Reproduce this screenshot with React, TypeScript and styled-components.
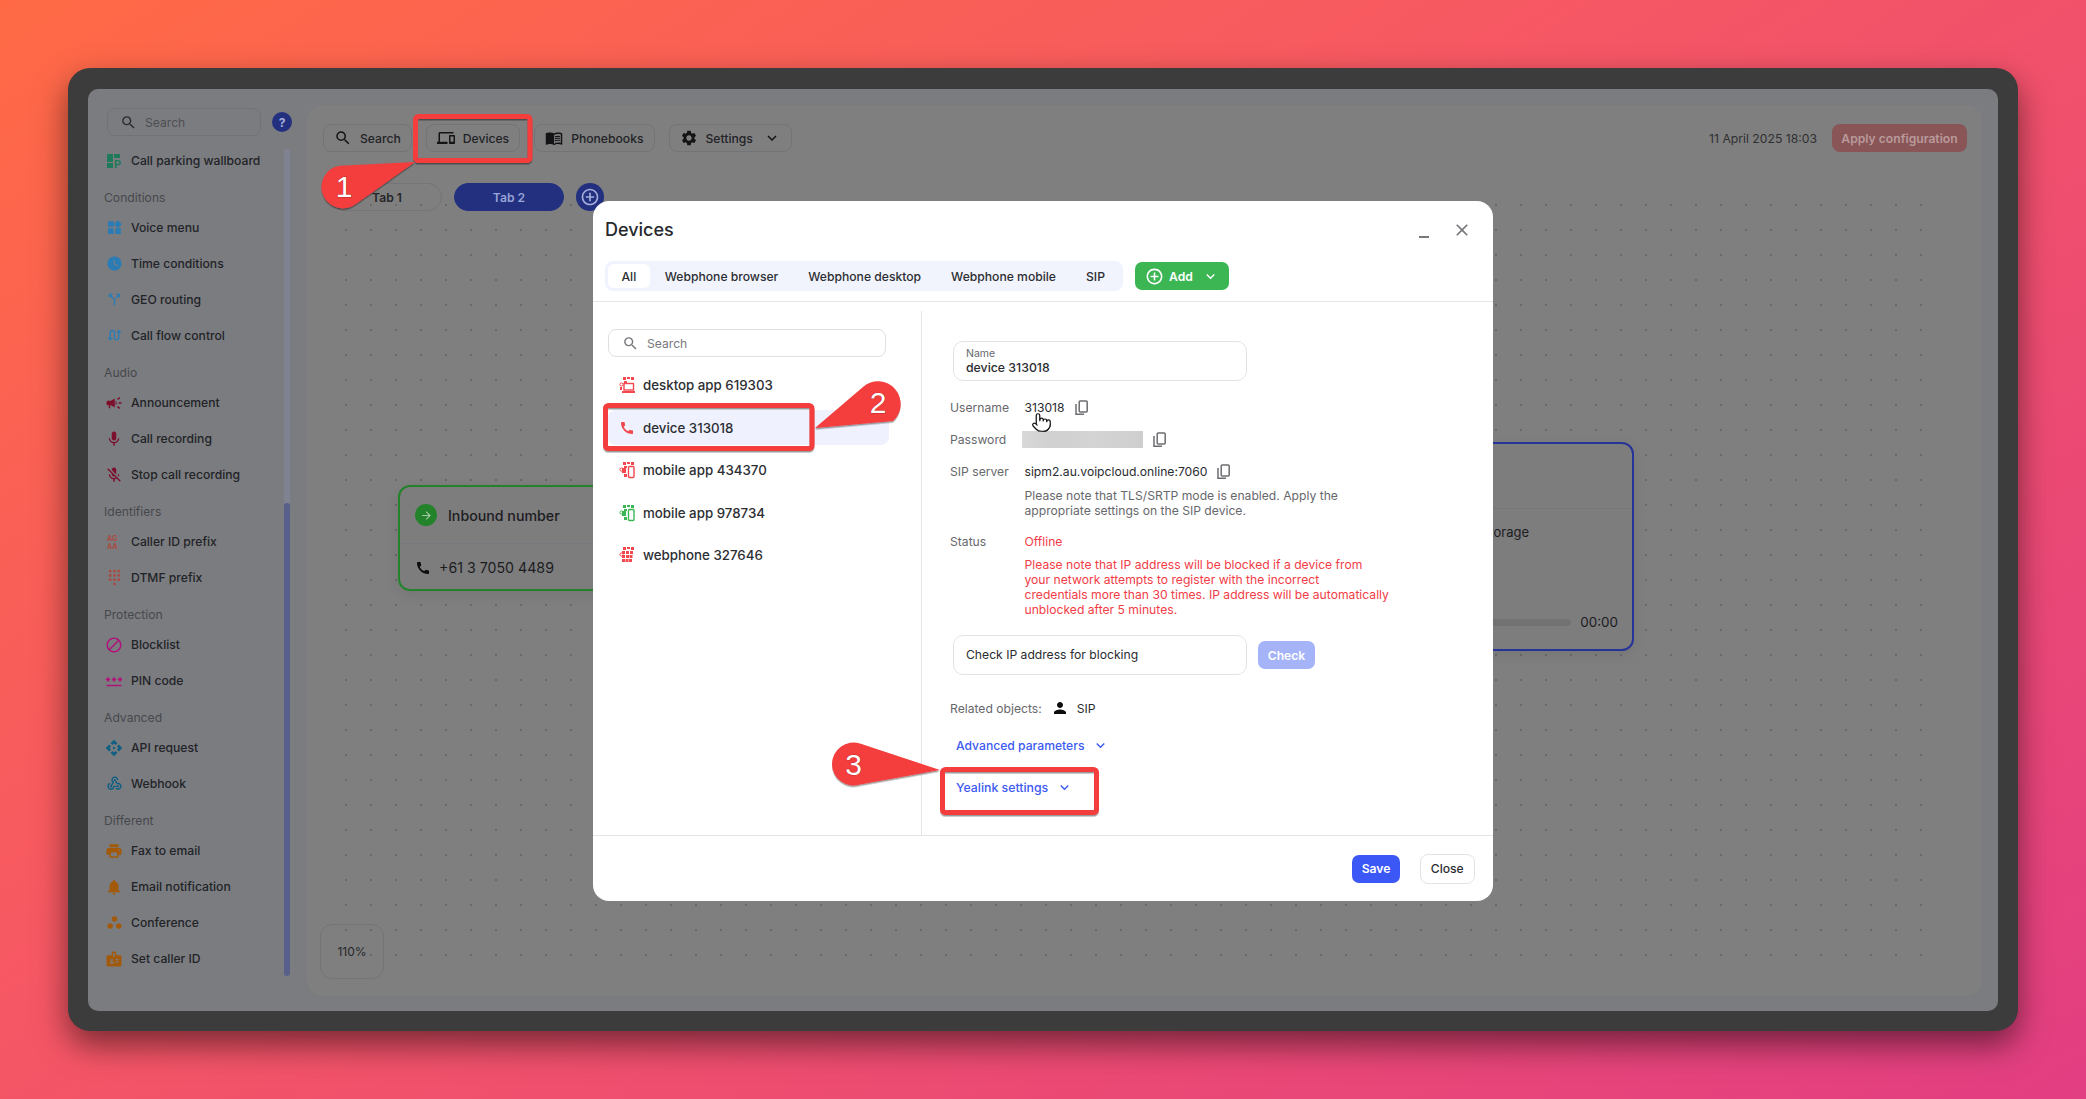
import React from "react";
import styled, { createGlobalStyle } from "styled-components";
import {
    MdSearch,
    MdOutlineDevices,
    MdMenuBook,
    MdSettings,
    MdExpandMore,
    MdAddCircleOutline,
    MdWidgets,
    MdWatchLater,
    MdCallSplit,
    MdSwapCalls,
    MdCampaign,
    MdMic,
    MdMicOff,
    MdDialpad,
    MdBlock,
    MdPassword,
    MdApi,
    MdWebhook,
    MdLocalPrintshop,
    MdNotifications,
    MdWorkspaces,
    MdBadge,
    MdCall,
    MdArrowForward,
    MdClose,
    MdPerson,
} from "react-icons/md";
import { Pointer } from "lucide-react";

const GlobalStyle = createGlobalStyle`
    html, body {
        margin: 0;
        padding: 0;
        width: 2086px;
        height: 1099px;
        overflow: hidden;
    }
    body {
        font-family: Inter, "Liberation Sans", sans-serif;
        background: linear-gradient(148deg, #ff6a45 0%, #f65764 42%, #e23e82 100%);
    }
    * {
        box-sizing: border-box;
    }
`;

const Page = styled.div`
    position: relative;
    width: 2086px;
    height: 1099px;
    padding: 68px 68px 68px 68px;
`;

const Frame = styled.div`
    width: 1950px;
    height: 963px;
    padding: 21px 20px 20px;
    background: #3c3c3c;
    border-radius: 22px;
    box-shadow: 0 14px 32px rgba(0, 0, 0, 0.5);
`;

const AppShell = styled.div`
    position: relative;
    display: flex;
    height: 100%;
    background: #7b7c80;
    border-radius: 10px;
`;

/* sidebar */

const Sidebar = styled.aside`
    width: 219px;
    flex: none;
    padding: 19px 0 0 16px;
    position: relative;
`;

const SideTop = styled.div`
    display: flex;
    align-items: center;
    padding-left: 3px;
    margin-bottom: 7px;
`;

const SideSearch = styled.div`
    width: 154px;
    height: 28px;
    border: 1px solid #717276;
    border-radius: 8px;
    display: flex;
    align-items: center;
    gap: 8px;
    padding-left: 12px;
    font-size: 12.15px;
    color: #4d4e52;
    svg {
        color: #2b2c2f;
    }
`;

const HelpDot = styled.div`
    width: 20px;
    height: 20px;
    margin-left: 11px;
    border-radius: 50%;
    background: #22307f;
    color: #a5aedb;
    font-size: 12px;
    font-weight: 700;
    display: flex;
    align-items: center;
    justify-content: center;
`;

const SideHeading = styled.div`
    height: 31px;
    padding-top: 10px;
    line-height: 18px;
    font-size: 12.15px;
    color: #47484c;
`;

const SideItem = styled.div`
    height: 36px;
    display: flex;
    align-items: center;
    padding: 0 0 1px 1px;
    font-size: 12.15px;
    font-weight: 500;
    color: #222327;
`;

const SideIcon = styled.span<{ $color: string }>`
    width: 18px;
    height: 18px;
    margin-right: 8px;
    flex: none;
    display: flex;
    align-items: center;
    justify-content: center;
    color: ${(props) => props.$color};
`;

const ScrollTrack = styled.div`
    position: absolute;
    left: 196px;
    top: 60px;
    bottom: 35px;
    width: 6px;
    border-radius: 3px;
    background: #7f8290;
`;

const ScrollThumb = styled.div`
    position: absolute;
    left: 0;
    right: 0;
    top: 354px;
    bottom: 0;
    border-radius: 3px;
    background: #575f8a;
`;

/* canvas */

const Canvas = styled.main`
    position: relative;
    flex: 1;
    margin: 16px 16px 15px 0;
    padding: 19px 15px 0 16px;
    background: #7f7f7f;
    border-radius: 16px;
`;

const DotGrid = styled.div`
    position: absolute;
    left: 38px;
    top: 99px;
    right: 60px;
    bottom: 35px;
    background-image: radial-gradient(circle at 1px 1px, #69696b 1px, transparent 1.2px);
    background-size: 25px 25px;
`;

const Toolbar = styled.div`
    position: relative;
    display: flex;
    align-items: center;
    gap: 14px;
`;

const ToolButton = styled.div`
    height: 28px;
    display: flex;
    align-items: center;
    gap: 8px;
    padding: 0 10px;
    border: 1px solid #737477;
    border-radius: 8px;
    font-size: 12.15px;
    font-weight: 500;
    color: #222327;
    svg {
        color: #141416;
    }
`;

const SettingsChevron = styled(MdExpandMore)`
    margin-left: 2px;
`;

const ToolDate = styled.span`
    margin-left: auto;
    font-size: 12.2px;
    color: #2e2f31;
`;

const ApplyButton = styled.div`
    width: 135px;
    height: 28px;
    margin-left: 1px;
    display: flex;
    align-items: center;
    justify-content: center;
    border-radius: 8px;
    background: #8a5557;
    color: #b89a9b;
    font-size: 12.15px;
    font-weight: 600;
`;

const TabRow = styled.div`
    position: relative;
    display: flex;
    align-items: center;
    gap: 12px;
    margin: 31px 0 0 9px;
`;

const FlowTab = styled.div<{ $active?: boolean }>`
    width: 110px;
    height: 28px;
    display: flex;
    align-items: center;
    justify-content: center;
    border-radius: 14px;
    border: 1px solid ${(props) => (props.$active ? "#22307f" : "#747578")};
    background: ${(props) => (props.$active ? "#22307f" : "transparent")};
    color: ${(props) => (props.$active ? "#98a3d6" : "#26272a")};
    font-size: 12.15px;
    font-weight: 600;
`;

const AddTab = styled.div`
    width: 28px;
    height: 28px;
    border-radius: 50%;
    background: #22307f;
    color: #a5aedb;
    display: flex;
    align-items: center;
    justify-content: center;
`;

const ZoomBadge = styled.div`
    position: absolute;
    left: 13px;
    bottom: 17px;
    width: 64px;
    height: 55px;
    display: flex;
    align-items: center;
    justify-content: center;
    border: 1px solid #737477;
    border-radius: 12px;
    font-size: 12px;
    color: #26272a;
`;

const Node = styled.div<{ $border: string }>`
    position: absolute;
    border: 2px solid ${(props) => props.$border};
    border-radius: 12px;
    background: #7d7d7e;
    box-shadow: 0 4px 14px rgba(0, 0, 0, 0.08);
`;

const InboundNode = styled(Node)`
    left: 91px;
    top: 380px;
    width: 300px;
    height: 106px;
`;

const StorageNode = styled(Node)`
    left: 993px;
    top: 337px;
    width: 334px;
    height: 209px;
`;

const NodeHead = styled.div`
    height: 57px;
    display: flex;
    align-items: center;
    gap: 11px;
    padding-left: 15px;
    border-bottom: 1px solid #76777d;
    font-size: 14.2px;
    font-weight: 500;
    color: #1c1c1e;
`;

const NodeHeadTall = styled(NodeHead)`
    height: 65px;
`;

const GreenDot = styled.span`
    width: 22px;
    height: 22px;
    border-radius: 50%;
    background: #23832a;
    color: #a6c9a8;
    display: flex;
    align-items: center;
    justify-content: center;
`;

const NodeLine = styled.div`
    display: flex;
    align-items: center;
    gap: 8px;
    padding: 15px 0 0 15px;
    font-size: 14.2px;
    color: #1c1c1e;
    svg {
        color: #0c0c0c;
    }
`;

const StorageText = styled.div`
    padding: 15px 103px 0 0;
    text-align: right;
    font-size: 13px;
    color: #1c1c1e;
`;

const StorageTimeline = styled.div`
    display: flex;
    align-items: center;
    justify-content: flex-end;
    gap: 9px;
    margin-top: 74px;
    padding-right: 14px;
    font-size: 13.4px;
    color: #1c1c1e;
`;

const StorageBar = styled.div`
    width: 150px;
    height: 7px;
    border-radius: 4px;
    background: #727272;
`;

/* modal */

const Modal = styled.section`
    position: absolute;
    left: 505px;
    top: 112px;
    width: 900px;
    height: 700px;
    display: flex;
    flex-direction: column;
    background: #fff;
    border-radius: 16px;
    overflow: hidden;
`;

const ModalHead = styled.header`
    height: 60px;
    flex: none;
    display: flex;
    align-items: flex-start;
    justify-content: space-between;
    padding: 17px 21px 0 12px;
`;

const ModalTitle = styled.h2`
    margin: 0;
    font-size: 18px;
    line-height: 24px;
    font-weight: 500;
    color: #26282c;
`;

const HeadControls = styled.div`
    display: flex;
    align-items: center;
    gap: 23px;
    height: 24px;
    color: #77787c;
`;

const MinimizeMark = styled.span`
    width: 10px;
    height: 2px;
    margin-top: 13px;
    background: #77787c;
`;

const TabLine = styled.div`
    height: 41px;
    flex: none;
    display: flex;
    gap: 12px;
    padding-left: 12px;
    border-bottom: 1px solid #e4e5e8;
`;

const TypeTabs = styled.div`
    width: 518px;
    height: 30px;
    display: flex;
    align-items: center;
    padding: 0 3px;
    border-radius: 8px;
    background: #f2f4fd;
`;

const TypeTab = styled.div<{ $active?: boolean }>`
    height: 24px;
    display: flex;
    align-items: center;
    padding: 0 ${(props) => (props.$active ? "13.5px" : "15px")};
    border-radius: 6px;
    background: ${(props) => (props.$active ? "#fff" : "transparent")};
    font-size: 12.15px;
    font-weight: 500;
    white-space: nowrap;
    color: #2c2e33;
`;

const AddButton = styled.div`
    width: 94px;
    height: 28px;
    margin-top: 1px;
    display: flex;
    align-items: center;
    gap: 5px;
    padding-left: 10px;
    border-radius: 7px;
    background: #3cb553;
    color: #fff;
    font-size: 12.15px;
    font-weight: 600;
`;

const AddChevron = styled(MdExpandMore)`
    margin-left: 4px;
`;

const ModalBody = styled.div`
    flex: 1;
    min-height: 0;
    display: flex;
`;

const DeviceColumn = styled.div`
    width: 329px;
    flex: none;
    margin-top: 9px;
    padding: 18px 0 0 15px;
    border-right: 1px solid #e4e5e8;
`;

const DeviceSearch = styled.div`
    width: 278px;
    height: 28px;
    display: flex;
    align-items: center;
    gap: 8px;
    padding-left: 13px;
    border: 1px solid #dfe0e4;
    border-radius: 8px;
    font-size: 12.15px;
    color: #77787c;
`;

const DeviceList = styled.div`
    display: flex;
    flex-direction: column;
    gap: 7.5px;
    margin-top: 10.5px;
`;

const DeviceRow = styled.div<{ $active?: boolean }>`
    width: 281px;
    height: 35px;
    display: flex;
    align-items: center;
    gap: 8px;
    padding-left: 11px;
    border-radius: 8px;
    background: ${(props) => (props.$active ? "#eff2fe" : "transparent")};
    font-size: 13.3px;
    font-weight: 500;
    color: #2c2e33;
`;

const DetailColumn = styled.div`
    flex: 1;
    padding: 39px 0 0 28px;
`;

const FieldBox = styled.div`
    width: 293.5px;
    height: 40px;
    margin-left: 3px;
    padding: 0 12px;
    border: 1px solid #e2e3e6;
    border-radius: 10px;
    color: #2a2c30;
    font-size: 12.3px;
    font-weight: 500;
`;

const NameBox = styled(FieldBox)`
    padding-top: 6px;
    line-height: 15px;
`;

const NameLabel = styled.div`
    font-size: 10.5px;
    line-height: 12px;
    font-weight: 400;
    color: #67686c;
`;

const InfoTable = styled.div`
    margin-top: 11px;
`;

const InfoRow = styled.div`
    height: 32px;
    display: flex;
    align-items: center;
    padding-bottom: 1px;
    font-size: 12.15px;
    color: #2a2c30;
`;

const InfoLabel = styled.span`
    width: 74.5px;
    flex: none;
    color: #67686c;
`;

const CopyGlyph = styled.svg`
    margin-left: 10px;
    flex: none;
    color: #6c6d70;
`;

const HiddenPassword = styled.div`
    width: 121px;
    height: 17px;
    margin-left: -2.5px;
    background: linear-gradient(90deg, #d8d8d8, #d0d0d0 25%, #d4d4d4 60%, #cecece);
`;

const NoteText = styled.div<{ $danger?: boolean }>`
    margin-left: 74.5px;
    margin-top: ${(props) => (props.$danger ? "3px" : "0")};
    width: 380px;
    font-size: 12.15px;
    line-height: 15px;
    color: ${(props) => (props.$danger ? "#f23c46" : "#67686c")};
`;

const StatusRow = styled(InfoRow)`
    height: 24px;
    margin-top: 11.5px;
    padding-bottom: 0;
`;

const OfflineValue = styled.span`
    color: #f23c46;
`;

const CheckLine = styled.div`
    display: flex;
    align-items: center;
    gap: 11.5px;
    margin-top: 18.5px;
`;

const CheckBox = styled(FieldBox)`
    display: flex;
    align-items: center;
    padding-bottom: 2px;
    font-weight: 400;
    font-size: 12.15px;
`;

const CheckButton = styled.div`
    width: 57px;
    height: 28px;
    display: flex;
    align-items: center;
    justify-content: center;
    border-radius: 7px;
    background: #a5b4f8;
    color: #fff;
    font-size: 12.15px;
    font-weight: 600;
`;

const RelatedLine = styled.div`
    display: flex;
    align-items: center;
    height: 20px;
    margin-top: 23px;
    font-size: 12.15px;
    color: #2a2c30;
    span:first-child {
        color: #67686c;
        margin-right: 9px;
    }
    svg {
        margin-right: 8px;
        color: #0d0d0d;
    }
`;

const ExpandLink = styled.div`
    display: flex;
    align-items: center;
    gap: 8px;
    height: 20px;
    margin: 17px 0 0 6px;
    font-size: 12.15px;
    font-weight: 500;
    color: #3d5af1;
`;

const ExpandLinkLower = styled(ExpandLink)`
    margin-top: 22px;
    font-size: 12.3px;
`;

const ModalFoot = styled.footer`
    height: 66px;
    flex: none;
    display: flex;
    align-items: center;
    justify-content: flex-end;
    gap: 20px;
    padding-right: 18.5px;
    border-top: 1px solid #e4e5e8;
`;

const SaveButton = styled.div`
    width: 48px;
    height: 28px;
    display: flex;
    align-items: center;
    justify-content: center;
    border-radius: 7px;
    background: #3b57f5;
    color: #fff;
    font-size: 12.15px;
    font-weight: 600;
`;

const CloseButton = styled.div`
    width: 54.5px;
    height: 30px;
    display: flex;
    align-items: center;
    justify-content: center;
    border: 1px solid #e2e3e6;
    border-radius: 8px;
    color: #2a2c30;
    font-size: 12.15px;
    font-weight: 500;
`;

/* overlays on top of the screenshot */

const HandCursor = styled(Pointer)`
    position: absolute;
    left: 1031px;
    top: 412px;
    color: #111;
`;

const AnnotationLayer = styled.svg`
    position: absolute;
    left: 0;
    top: 0;
    pointer-events: none;
`;

const BubbleNumber = styled.text`
    font-family: "Liberation Sans", Arial, sans-serif;
    font-size: 30px;
    fill: #fff;
    text-anchor: middle;
    dominant-baseline: central;
    paint-order: stroke;
    stroke: rgba(90, 0, 0, 0.35);
    stroke-width: 1px;
`;

const ParkingIcon = () => (
    <svg width="16" height="16" viewBox="0 0 16 16">
        <rect x="1" y="1" width="6" height="8" fill="#1f7a5c" />
        <rect x="1" y="10" width="6" height="5" fill="#1f7a5c" />
        <rect x="8" y="1" width="6" height="4" fill="#1f7a5c" />
        <text x="8" y="15" fontSize="11" fontWeight="700" fill="#1f7a5c" fontFamily="Inter, sans-serif">
            P
        </text>
    </svg>
);

const PrefixIcon = () => (
    <svg width="16" height="16" viewBox="0 0 16 16" fill="#a94b42" fontFamily="Inter, sans-serif" fontWeight="700">
        <text x="1" y="7" fontSize="7">
            AG
        </text>
        <text x="1" y="15" fontSize="7">
            AA
        </text>
    </svg>
);

const CopyIcon = () => (
    <CopyGlyph width="13" height="16" viewBox="0 0 13 16" fill="none" stroke="currentColor" strokeWidth="1.5">
        <rect x="4.2" y="1" width="8" height="11" rx="1" />
        <path d="M1 4v10.2h8" />
    </CopyGlyph>
);

const DeviceIcon = ({ kind, color }: { kind: string; color: string }) => (
    <svg width="16" height="18" viewBox="0 0 16 18" fill={color} stroke="none">
        <rect x="4" y="1" width="3" height="3" />
        <rect x="8" y="1" width="3" height="2" />
        <rect x="12" y="1" width="3" height="3" />
        {kind !== "web" && <rect x="5" y="5" width="3" height="2" />}
        <circle cx="2.5" cy="8.5" r="1.6" fill="none" stroke={color} />
        {kind === "desktop" && (
            <>
                <rect x="5" y="7.5" width="9.5" height="6.5" fill="none" stroke={color} strokeWidth="1.4" />
                <rect x="3" y="15" width="13" height="2" />
                <rect x="1" y="11" width="2" height="3" />
            </>
        )}
        {kind === "mobile" && (
            <>
                <rect x="9.5" y="5.5" width="5.5" height="11" rx="1" fill="none" stroke={color} strokeWidth="1.4" />
                <rect x="3" y="7" width="4" height="5" />
                <rect x="5" y="13" width="3" height="3" />
            </>
        )}
        {kind === "web" && (
            <>
                <rect x="3" y="5" width="3" height="3" />
                <rect x="7" y="5" width="3" height="3" />
                <rect x="11" y="5" width="3" height="3" />
                <rect x="3" y="9" width="3" height="3" />
                <rect x="7" y="9" width="3" height="3" />
                <rect x="10.5" y="9" width="3" height="3" />
                <rect x="3" y="13" width="3" height="3" />
                <rect x="6.5" y="13" width="3" height="3" />
                <rect x="10" y="13" width="3" height="3" />
            </>
        )}
    </svg>
);

const GREEN = "#1f7a5c";
const BLUE = "#2b7cb4";
const CRIMSON = "#7c0f2c";
const BRICK = "#a94b42";
const MAGENTA = "#b0127a";
const TEAL = "#0f5f82";
const AMBER = "#a2590a";

type SideEntry = { heading: string } | { label: string; color: string; icon: React.ReactNode };

const sideEntries: SideEntry[] = [
    { label: "Call parking wallboard", color: GREEN, icon: <ParkingIcon /> },
    { heading: "Conditions" },
    { label: "Voice menu", color: BLUE, icon: <MdWidgets size={17} /> },
    { label: "Time conditions", color: BLUE, icon: <MdWatchLater size={17} /> },
    { label: "GEO routing", color: BLUE, icon: <MdCallSplit size={17} /> },
    { label: "Call flow control", color: BLUE, icon: <MdSwapCalls size={17} /> },
    { heading: "Audio" },
    { label: "Announcement", color: CRIMSON, icon: <MdCampaign size={18} /> },
    { label: "Call recording", color: CRIMSON, icon: <MdMic size={18} /> },
    { label: "Stop call recording", color: CRIMSON, icon: <MdMicOff size={18} /> },
    { heading: "Identifiers" },
    { label: "Caller ID prefix", color: BRICK, icon: <PrefixIcon /> },
    { label: "DTMF prefix", color: BRICK, icon: <MdDialpad size={17} /> },
    { heading: "Protection" },
    { label: "Blocklist", color: MAGENTA, icon: <MdBlock size={18} /> },
    { label: "PIN code", color: MAGENTA, icon: <MdPassword size={18} /> },
    { heading: "Advanced" },
    { label: "API request", color: TEAL, icon: <MdApi size={18} /> },
    { label: "Webhook", color: TEAL, icon: <MdWebhook size={17} /> },
    { heading: "Different" },
    { label: "Fax to email", color: AMBER, icon: <MdLocalPrintshop size={18} /> },
    { label: "Email notification", color: AMBER, icon: <MdNotifications size={18} /> },
    { label: "Conference", color: AMBER, icon: <MdWorkspaces size={17} /> },
    { label: "Set caller ID", color: AMBER, icon: <MdBadge size={18} /> },
];

const deviceRows = [
    { label: "desktop app 619303", kind: "desktop", color: "#f2484e" },
    { label: "device 313018", kind: "phone", color: "#f2484e" },
    { label: "mobile app 434370", kind: "mobile", color: "#f2484e" },
    { label: "mobile app 978734", kind: "mobile", color: "#3cb553" },
    { label: "webphone 327646", kind: "web", color: "#f2484e" },
];

const App = () => {
    return (
        <Page>
            <GlobalStyle />
            <Frame>
                <AppShell>
                    <Sidebar>
                        <SideTop>
                            <SideSearch>
                                <MdSearch size={17} />
                                Search
                            </SideSearch>
                            <HelpDot>?</HelpDot>
                        </SideTop>
                        {sideEntries.map((entry) =>
                            "heading" in entry ? (
                                <SideHeading key={entry.heading}>{entry.heading}</SideHeading>
                            ) : (
                                <SideItem key={entry.label}>
                                    <SideIcon $color={entry.color}>{entry.icon}</SideIcon>
                                    {entry.label}
                                </SideItem>
                            )
                        )}
                        <ScrollTrack>
                            <ScrollThumb />
                        </ScrollTrack>
                    </Sidebar>
                    <Canvas>
                        <DotGrid />
                        <InboundNode $border="#23832a">
                            <NodeHead>
                                <GreenDot>
                                    <MdArrowForward size={13} />
                                </GreenDot>
                                Inbound number
                            </NodeHead>
                            <NodeLine>
                                <MdCall size={16} />
                                +61 3 7050 4489
                            </NodeLine>
                        </InboundNode>
                        <StorageNode $border="#26349a">
                            <NodeHeadTall />
                            <StorageText>Storage</StorageText>
                            <StorageTimeline>
                                <StorageBar />
                                00:00
                            </StorageTimeline>
                        </StorageNode>
                        <Toolbar>
                            <ToolButton>
                                <MdSearch size={18} />
                                Search
                            </ToolButton>
                            <ToolButton>
                                <MdOutlineDevices size={18} />
                                Devices
                            </ToolButton>
                            <ToolButton>
                                <MdMenuBook size={18} />
                                Phonebooks
                            </ToolButton>
                            <ToolButton>
                                <MdSettings size={18} />
                                Settings
                                <SettingsChevron size={18} />
                            </ToolButton>
                            <ToolDate>11 April 2025 18:03</ToolDate>
                            <ApplyButton>Apply configuration</ApplyButton>
                        </Toolbar>
                        <TabRow>
                            <FlowTab>Tab 1</FlowTab>
                            <FlowTab $active>Tab 2</FlowTab>
                            <AddTab>
                                <MdAddCircleOutline size={20} />
                            </AddTab>
                        </TabRow>
                        <ZoomBadge>110%</ZoomBadge>
                    </Canvas>
                    <Modal>
                        <ModalHead>
                            <ModalTitle>Devices</ModalTitle>
                            <HeadControls>
                                <MinimizeMark />
                                <MdClose size={20} />
                            </HeadControls>
                        </ModalHead>
                        <TabLine>
                            <TypeTabs>
                                <TypeTab $active>All</TypeTab>
                                <TypeTab>Webphone browser</TypeTab>
                                <TypeTab>Webphone desktop</TypeTab>
                                <TypeTab>Webphone mobile</TypeTab>
                                <TypeTab>SIP</TypeTab>
                            </TypeTabs>
                            <AddButton>
                                <MdAddCircleOutline size={19} />
                                Add
                                <AddChevron size={17} />
                            </AddButton>
                        </TabLine>
                        <ModalBody>
                            <DeviceColumn>
                                <DeviceSearch>
                                    <MdSearch size={17} />
                                    Search
                                </DeviceSearch>
                                <DeviceList>
                                    {deviceRows.map((row) => (
                                        <DeviceRow key={row.label} $active={row.kind === "phone"}>
                                            {row.kind === "phone" ? (
                                                <MdCall size={16} color={row.color} />
                                            ) : (
                                                <DeviceIcon kind={row.kind} color={row.color} />
                                            )}
                                            {row.label}
                                        </DeviceRow>
                                    ))}
                                </DeviceList>
                            </DeviceColumn>
                            <DetailColumn>
                                <NameBox>
                                    <NameLabel>Name</NameLabel>
                                    device 313018
                                </NameBox>
                                <InfoTable>
                                    <InfoRow>
                                        <InfoLabel>Username</InfoLabel>
                                        313018
                                        <CopyIcon />
                                    </InfoRow>
                                    <InfoRow>
                                        <InfoLabel>Password</InfoLabel>
                                        <HiddenPassword />
                                        <CopyIcon />
                                    </InfoRow>
                                    <InfoRow>
                                        <InfoLabel>SIP server</InfoLabel>
                                        sipm2.au.voipcloud.online:7060
                                        <CopyIcon />
                                    </InfoRow>
                                    <NoteText>
                                        Please note that TLS/SRTP mode is enabled. Apply the
                                        <br />
                                        appropriate settings on the SIP device.
                                    </NoteText>
                                    <StatusRow>
                                        <InfoLabel>Status</InfoLabel>
                                        <OfflineValue>Offline</OfflineValue>
                                    </StatusRow>
                                    <NoteText $danger>
                                        Please note that IP address will be blocked if a device from
                                        <br />
                                        your network attempts to register with the incorrect
                                        <br />
                                        credentials more than 30 times. IP address will be automatically
                                        <br />
                                        unblocked after 5 minutes.
                                    </NoteText>
                                </InfoTable>
                                <CheckLine>
                                    <CheckBox>Check IP address for blocking</CheckBox>
                                    <CheckButton>Check</CheckButton>
                                </CheckLine>
                                <RelatedLine>
                                    <span>Related objects:</span>
                                    <MdPerson size={18} />
                                    <span>SIP</span>
                                </RelatedLine>
                                <ExpandLink>
                                    Advanced parameters
                                    <MdExpandMore size={17} />
                                </ExpandLink>
                                <ExpandLinkLower>
                                    Yealink settings
                                    <MdExpandMore size={17} />
                                </ExpandLinkLower>
                            </DetailColumn>
                        </ModalBody>
                        <ModalFoot>
                            <SaveButton>Save</SaveButton>
                            <CloseButton>Close</CloseButton>
                        </ModalFoot>
                    </Modal>
                </AppShell>
            </Frame>
            <HandCursor size={21} strokeWidth={1.4} fill="#fff" />
            <AnnotationLayer width="2086" height="1099" viewBox="0 0 2086 1099">
                <defs>
                    <filter id="callout-shadow" x="-10%" y="-10%" width="120%" height="130%">
                        <feDropShadow dx="0" dy="1.5" stdDeviation="0.6" floodColor="#000" floodOpacity="0.4" />
                    </filter>
                </defs>
                <g fill="none" stroke="#f43c3e" strokeWidth="5" filter="url(#callout-shadow)">
                    <rect x="415.5" y="116.5" width="114.5" height="44" rx="3" />
                    <rect x="605.5" y="405.5" width="206.5" height="43" rx="3" />
                    <rect x="942.5" y="769.5" width="154" height="43" rx="3" />
                </g>
                <g fill="#f43c3e" filter="url(#callout-shadow)">
                    <path d="M415 162 L345 165.5 A21.5 21.5 0 1 0 356 204 Z" />
                    <path d="M815 428 L863 387 A21 21 0 1 1 893 421 Z" />
                    <path d="M940 770 L860 743.5 A21.5 21.5 0 1 0 860 784.5 Z" />
                </g>
                <BubbleNumber x="344" y="186">
                    1
                </BubbleNumber>
                <BubbleNumber x="878" y="402">
                    2
                </BubbleNumber>
                <BubbleNumber x="853.5" y="764">
                    3
                </BubbleNumber>
            </AnnotationLayer>
        </Page>
    );
};

export default App;
